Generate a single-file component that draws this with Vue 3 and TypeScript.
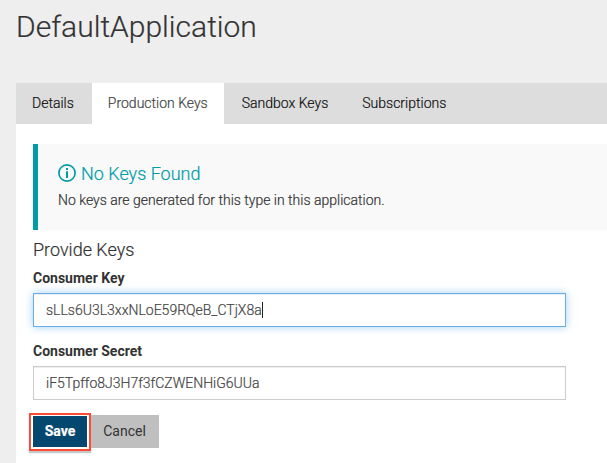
<script setup lang="ts">
import { ref } from 'vue'

const tabs: string[] = ['Details', 'Production Keys', 'Sandbox Keys', 'Subscriptions']
const activeTab = ref<string>('Production Keys')
const consumerKey = ref<string>('sLLs6U3L3xxNLoE59RQeB_CTjX8a')
const consumerSecret = ref<string>('iF5Tpffo8J3H7f3fCZWENHiG6UUa')
</script>

<template>
  <main class="page">
    <h1 class="title"><span>DefaultApplication</span></h1>
    <nav class="tabs">
      <button
        v-for="tab in tabs"
        :key="tab"
        class="tab"
        :class="{ active: tab === activeTab }"
        @click="activeTab = tab"
      ><span>{{ tab }}</span></button>
    </nav>
    <section class="panel">
      <div class="notice">
        <h4 class="notice-title">
          <svg class="info" viewBox="0 0 18 18" aria-hidden="true">
            <circle cx="9" cy="9" r="8.1" fill="none" stroke="currentColor" stroke-width="1.7" />
            <path d="M8 4h2v2H8zM8 7.2h2V14H8z" fill="currentColor" />
          </svg>
          <span>No Keys Found</span>
        </h4>
        <p class="notice-text"><span>No keys are generated for this type in this application.</span></p>
      </div>
      <h4 class="heading"><span>Provide Keys</span></h4>
      <div class="label"><span>Consumer Key</span></div>
      <div class="field focused"><span>{{ consumerKey }}</span><i class="caret"></i></div>
      <div class="label second"><span>Consumer Secret</span></div>
      <div class="field"><span>{{ consumerSecret }}</span></div>
      <div class="actions">
        <div class="highlight"><button class="save"><span>Save</span></button></div>
        <button class="cancel"><span>Cancel</span></button>
      </div>
    </section>
  </main>
</template>

<style>
body {
  margin: 0;
  background: #eee;
  overflow: hidden;
}
</style>

<style scoped>
.page {
  box-sizing: border-box;
  height: 463px;
  padding-left: 16px;
  font-family: Roboto, "Liberation Sans", sans-serif;
  font-size: 14px;
  font-weight: 300;
  -webkit-text-stroke: 0.2px currentColor;
  color: #333;
  display: flex;
  flex-direction: column;
}
h1, h4, p {
  margin: 0;
  font-weight: 300;
}
button {
  border: 0;
  margin: 0;
  font: inherit;
  color: inherit;
}
.title {
  height: 83px;
  box-sizing: border-box;
  padding-top: 9px;
  font-size: 30px;
  line-height: 36px;
}
.tabs {
  display: flex;
  gap: 2px;
  height: 41px;
  background: #ddd;
}
.tab {
  padding: 0 16px 2px;
  background: transparent;
  color: #111;
}
.tab.active {
  background: #fff;
  color: #444;
}
.panel {
  flex: 1;
  background: #fff;
  padding: 20px 0 0 17px;
}
.notice {
  box-sizing: border-box;
  height: 86px;
  border-left: 5px solid #009da7;
  background: #f9f9f9;
  padding: 18px 0 0 20px;
}
.notice-title {
  display: flex;
  align-items: center;
  gap: 5px;
  height: 22px;
  font-size: 18px;
  color: #009da7;
}
.info {
  width: 18px;
  height: 18px;
}
.notice-text {
  padding-top: 6px;
  line-height: 20px;
}
.heading {
  padding-top: 9px;
  font-size: 18px;
  line-height: 22px;
}
.label {
  height: 32px;
  padding-top: 7px;
  box-sizing: border-box;
  line-height: 20px;
  font-weight: 700;
  -webkit-text-stroke: 0;
}
.label.second {
  height: 39px;
  padding-top: 14px;
}
.field {
  box-sizing: border-box;
  width: 533px;
  height: 34px;
  border: 1px solid #ccc;
  padding: 0 12px;
  display: flex;
  align-items: center;
  color: #444;
  box-shadow: inset 0 1px 1px rgba(0, 0, 0, 0.075);
}
.field.focused {
  border-color: #66afe9;
  box-shadow: inset 0 1px 1px rgba(0, 0, 0, 0.075), 0 0 8px rgba(102, 175, 233, 0.6);
}
.caret {
  width: 1px;
  height: 16px;
  background: #222;
}
.actions {
  display: flex;
  margin: 13px 0 0 -4px;
}
.highlight {
  box-sizing: border-box;
  width: 62px;
  height: 38px;
  border: 2px solid #fb4b37;
  padding: 1px 2px 2px;
  background: #fff;
  box-shadow: 0 2px 1px rgba(0, 0, 0, 0.22);
  display: flex;
}
.save {
  flex: 1;
  padding: 0 0 1px;
  background: #04476f;
  color: #fff;
  font-weight: 700;
}
.cancel {
  width: 68px;
  height: 33px;
  margin-top: 2px;
  padding: 0 1px 2px 0;
  background: #bfbfbf;
  font-weight: 400;
  -webkit-text-stroke: 0;
}
</style>
